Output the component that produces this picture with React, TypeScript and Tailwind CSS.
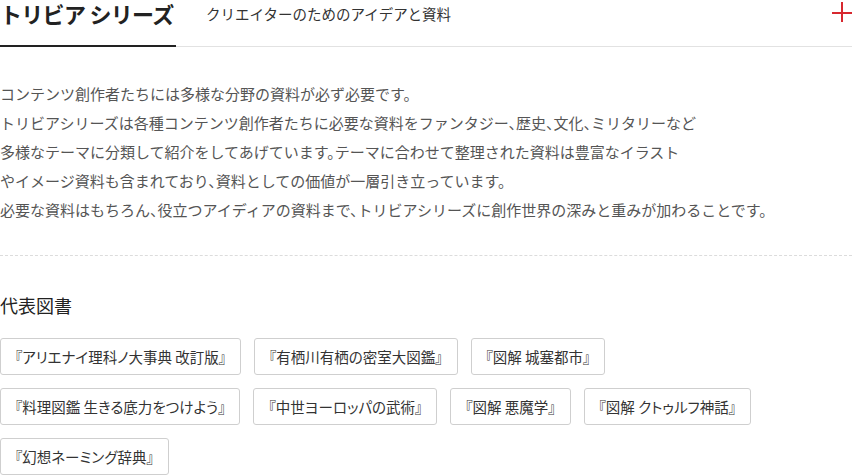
import React from "react";

const rows: string[][] = [
  ["『アリエナイ理科ノ大事典 改訂版』", "『有栖川有栖の密室大図鑑』", "『図解 城塞都市』"],
  ["『料理図鑑 生きる底力をつけよう』", "『中世ヨーロッパの武術』", "『図解 悪魔学』", "『図解 クトゥルフ神話』"],
  ["『幻想ネーミング辞典』"],
];

export default function App() {
  return (
    <div
      className="w-[852px] h-[476px] overflow-hidden bg-white text-[#333]"
      style={{ fontFamily: '"Noto Sans CJK JP", "Noto Sans", sans-serif' }}
    >
      <div className="flex items-start h-[47px] border-b border-[#e2e2e2]">
        <div className="w-[176px] h-[47px] -mb-px border-b-2 border-[#222] shrink-0">
          <h1 className="text-[22px] font-bold leading-[26px] text-[#222] tracking-[-0.7px] whitespace-nowrap">トリビア シリーズ</h1>
        </div>
        <div className="ml-[30px] text-[14.5px] leading-[28px] text-[#333]">クリエイターのためのアイデアと資料</div>
        <div className="ml-auto mt-[2px] relative w-[20px] h-[20px]">
          <div className="absolute left-0 top-[10px] w-[20px] h-[2px] bg-[#d7282f]" />
          <div className="absolute left-[9px] top-0 w-[2px] h-[20px] bg-[#d7282f]" />
        </div>
      </div>

      <div className="mt-[32px] text-[15px] leading-[29px] text-[#555] [font-feature-settings:'halt']">
        <p>コンテンツ創作者たちには多様な分野の資料が必ず必要です。</p>
        <p>トリビアシリーズは各種コンテンツ創作者たちに必要な資料をファンタジー、歴史、文化、ミリタリーなど</p>
        <p>多様なテーマに分類して紹介をしてあげています。テーマに合わせて整理された資料は豊富なイラスト</p>
        <p>やイメージ資料も含まれており、資料としての価値が一層引き立っています。</p>
        <p>必要な資料はもちろん、役立つアイディアの資料まで、トリビアシリーズに創作世界の深みと重みが加わることです。</p>
      </div>

      <div className="mt-[31px] border-t border-dashed border-[#dcdcdc]" />

      <h2 className="mt-[36px] text-[18px] leading-[27px] text-[#222]">代表図書</h2>

      <div className="mt-[19px] flex flex-col gap-[13px]">
        {rows.map((row, i) => (
          <div key={i} className="flex gap-[13px]">
            {row.map((t) => (
              <div
                key={t}
                className="h-[37px] px-[14px] flex items-center border border-[#cfcfcf] rounded-[3px] text-[14.5px] text-[#333] whitespace-nowrap [font-feature-settings:'palt']"
              >
                {t}
              </div>
            ))}
          </div>
        ))}
      </div>
    </div>
  );
}
